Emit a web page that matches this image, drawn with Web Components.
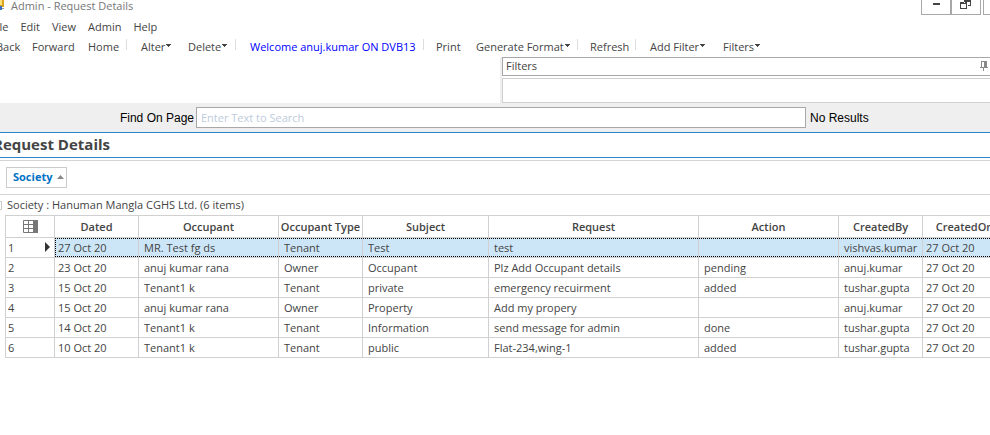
<!DOCTYPE html>
<html lang="en">
<head>
<meta charset="utf-8">
<title>Admin - Request Details</title>
<style>
html, body { margin: 0; min-height: 100%; background: #fff; }
body { font: 11px/16px "Open Sans", "Noto Sans", sans-serif; color: #444; overflow: hidden; }
</style>
</head>
<body>
<app-window>
  <title-bar slot="top">Admin - Request Details</title-bar>
  <menu-bar slot="top"></menu-bar>
  <tool-bar slot="top"></tool-bar>
  <filter-panel slot="top"></filter-panel>
  <find-bar slot="top"></find-bar>
  <page-heading>Request Details</page-heading>
  <group-chip>Society</group-chip>
  <request-grid></request-grid>
</app-window>
<script>
class Base extends HTMLElement {
  connectedCallback() {
    if (this.shadowRoot) return;
    this.attachShadow({ mode: 'open' }).innerHTML =
      '<style>:host{display:block}*{box-sizing:border-box}button{font:inherit;color:inherit;background:none;border:0;padding:0;margin:0;text-align:left;white-space:nowrap}</style>' + this.render();
  }
}

customElements.define('app-window', class extends Base {
  render() { return `<style>:host{overflow:hidden}</style><header><slot name="top"></slot></header><main><slot></slot></main>`; }
});

customElements.define('title-bar', class extends Base {
  render() { return `
    <style>
      :host { display: flex; height: 17px; color: #777; }
      .logo { width: 4px; height: 10px; }
      .name { flex: 1; padding-left: 7px; line-height: 11px; }
      .buttons { display: flex; height: 15px; }
      .buttons button { width: 30px; border: 1px solid #a8a8a8; border-top: 0; display: grid; place-items: start center; }
      .buttons button:last-child { width: 7px; margin-left: 2px; border-right: 0; }
      svg { display: block; }
    </style>
    <svg class="logo" viewBox="0 0 4 10" aria-hidden="true"><path fill="#d9a31c" d="M0 0h4v7H0z"/><path fill="#fbe07a" d="M0 0h2v5H0z"/><path fill="#3b6fc4" d="M0 6h2v4H0z"/><path fill="#999" d="M2 8h2v1H2z"/></svg>
    <span class="name"><slot></slot></span>
    <div class="buttons">
      <button aria-label="Minimize"><svg width="12" height="12"><path fill="#444" d="M3 3h7v2H3z"/></svg></button>
      <button aria-label="Restore"><svg width="12" height="10"><path fill="#444" fill-rule="evenodd" d="M4 0h7v6H8V5h2V2H5v1H4zM0 2h7v7H0zM1 4v4h5V4z"/></svg></button>
      <button aria-label="Close"></button>
    </div>`; }
});

customElements.define('menu-bar', class extends Base {
  render() { return `
    <style>nav { display: flex; gap: 12px; height: 20px; margin-left: -9px; } button { line-height: 20px; }</style>
    <nav>${['File', 'Edit', 'View', 'Admin', 'Help'].map(t => `<button>${t}</button>`).join('')}</nav>`; }
});

customElements.define('tool-bar', class extends Base {
  render() {
    const items = ['Back', 'Forward', 'Home', '|', 'Alter>', 'Delete>', '|', '@Welcome anuj.kumar ON DVB13', '|', 'Print', 'Generate Format>', '|', 'Refresh', '|', 'Add Filter>', 'Filters>'];
    const cell = t => t === '|' ? '<i></i>'
      : t[0] === '@' ? `<span>${t.slice(1)}</span>`
      : t.endsWith('>') ? `<button aria-haspopup="menu">${t.slice(0, -1)}<svg width="5" height="3" aria-hidden="true"><path d="M0 0h5v1H4v1H3v1H2V2H1V1H0z" fill="#444"/></svg></button>`
      : `<button>${t}</button>`;
    return `
    <style>
      nav { display: grid; grid-template-columns: 36px 56px 38px 15px 47px 47px 15px 173px 13px 40px 101px 13px 45px 15px 73px auto; justify-content: start; height: 20px; margin-left: -4px; line-height: 20px; }
      i { width: 1px; height: 11px; margin-top: 2px; background: #ddd; }
      span { color: #00f; white-space: nowrap; }
      svg { margin-left: 1px; vertical-align: 4px; }
    </style>
    <nav>${items.map(cell).join('')}</nav>`; }
});

customElements.define('filter-panel', class extends Base {
  render() { return `
    <style>
      section { margin-left: 500px; border-left: 2px solid #efefef; }
      .head { display: flex; align-items: center; justify-content: space-between; height: 19px; padding: 0 2px 1px 3px; border: 1px solid #a8a8a8; border-right: 0; }
      .body { height: 25px; margin-top: 2px; border: 1px solid #d0d0d0; border-right: 0; }
      svg { display: block; }
    </style>
    <section aria-label="Filters">
      <div class="head"><span>Filters</span><button aria-label="Pin"><svg width="8" height="10"><path fill="#888" d="M1 0h6v6h1v1H4v3H3V7H0V6h1zM2 1v5h2V1z" fill-rule="evenodd"/></svg></button></div>
      <div class="body"></div>
    </section>`; }
});

customElements.define('find-bar', class extends Base {
  render() { return `
    <style>
      form { display: flex; align-items: center; height: 29px; background: #efefef; font: 12px/16px "Liberation Sans", Arial, sans-serif; color: #000; }
      label { width: 196px; padding-right: 2px; text-align: right; }
      input { flex: 1; min-width: 0; height: 21px; padding: 0 4px; border: 1px solid #a8a8a8; border-radius: 0; background: #fff; font: 11px/16px "Open Sans", sans-serif; color: #444; outline: 0; }
      input::placeholder { color: #bccbdc; opacity: 1; }
      output { width: 184px; padding-left: 4px; }
    </style>
    <form><label for="q">Find On Page</label><input id="q" type="text" placeholder="Enter Text to Search"><output for="q">No Results</output></form>`; }
});

customElements.define('page-heading', class extends Base {
  render() { return `
    <style>
      :host { border-bottom: 1px solid #d4d4d4; padding-bottom: 2px; }
      h1 { margin: 0; height: 26px; border: solid #2a86cc; border-width: 1px 0; font-size: 15px; line-height: 23px; font-weight: 700; text-indent: -7px; white-space: nowrap; }
    </style>
    <h1><slot></slot></h1>`; }
});

customElements.define('group-chip', class extends Base {
  render() { return `
    <style>
      :host { padding: 6px; border-bottom: 1px solid #d4d4d4; }
      button { display: flex; align-items: center; gap: 5px; height: 21px; padding: 0 2px 1px 6px; border: 1px solid #ccc; color: #0072c6; font-weight: 700; }
    </style>
    <button><slot></slot><svg width="7" height="4" aria-hidden="true"><path d="M0 4l3.500-4L7 4z" fill="#888"/></svg></button>`; }
});

customElements.define('request-grid', class extends Base {
  render() {
    const cols = [['Dated', 84], ['Occupant', 140], ['Occupant Type', 84], ['Subject', 126], ['Request', 210], ['Action', 140], ['CreatedBy', 84], ['CreatedOn', 84]];
    const rows = [
      ['27 Oct 20', 'MR. Test fg ds', 'Tenant', 'Test', 'test', '', 'vishvas.kumar', '27 Oct 20'],
      ['23 Oct 20', 'anuj kumar rana', 'Owner', 'Occupant', 'Plz Add Occupant details', 'pending', 'anuj.kumar', '27 Oct 20'],
      ['15 Oct 20', 'Tenant1 k', 'Tenant', 'private', 'emergency recuirment', 'added', 'tushar.gupta', '27 Oct 20'],
      ['15 Oct 20', 'anuj kumar rana', 'Owner', 'Property', 'Add my propery', '', 'anuj.kumar', '27 Oct 20'],
      ['14 Oct 20', 'Tenant1 k', 'Tenant', 'Information', 'send message for admin', 'done', 'tushar.gupta', '27 Oct 20'],
      ['10 Oct 20', 'Tenant1 k', 'Tenant', 'public', 'Flat-234,wing-1', 'added', 'tushar.gupta', '27 Oct 20']];
    return `
    <style>
      .group { display: flex; align-items: center; gap: 5px; height: 20px; }
      .group button { width: 2px; height: 9px; border: 1px solid #ccc; border-left: 0; }
      table { table-layout: fixed; width: 1002px; margin-left: 5px; border-collapse: separate; border-spacing: 0; border: solid #d0d0d0; border-width: 1px 0 0 1px; }
      th, td { height: 20px; padding: 0 5px 1px; border: solid #d0d0d0; border-width: 0 1px 1px 0; line-height: 17px; text-align: left; font-weight: 400; white-space: nowrap; overflow: hidden; }
      thead th { height: 22px; padding: 0 0 1px; line-height: 19px; font-weight: 600; text-align: center; }
      tbody th { padding: 0 2px 1px; }
      tbody th div { display: flex; align-items: center; justify-content: space-between; }
      td.date { padding: 0 3px 1px; }
      tr.on td { background:
        repeating-linear-gradient(90deg, #000 0 1px, #cde6f7 1px 2px) 0 0 / 100% 1px no-repeat,
        repeating-linear-gradient(90deg, #000 0 1px, #cde6f7 1px 2px) 0 100% / 100% 1px no-repeat, #cde6f7;
        background-clip: padding-box; }
      tr.on td:nth-child(2) { background:
        repeating-linear-gradient(90deg, #000 0 1px, #cde6f7 1px 2px) 0 0 / 100% 1px no-repeat,
        repeating-linear-gradient(90deg, #000 0 1px, #cde6f7 1px 2px) 0 100% / 100% 1px no-repeat,
        repeating-linear-gradient(#000 0 1px, #cde6f7 1px 2px) 0 0 / 1px 100% no-repeat, #cde6f7;
        background-clip: padding-box; }
      svg { display: block; }
      thead svg { margin: 0 auto; }
    </style>
    <div class="group"><button aria-label="Collapse group"></button><span>Society : Hanuman Mangla CGHS Ltd. (6 items)</span></div>
    <table>
      <colgroup><col style="width:49px">${cols.map(c => `<col style="width:${c[1]}px">`).join('')}</colgroup>
      <thead><tr><th aria-label="Columns"><svg width="15" height="13"><path fill="#fff" stroke="#777" d="M.5.5h14v12H.5zM.5 4.500h10M.5 8.500h10M5.500.5v12"/><path fill="#777" d="M10 0h5v13h-5z"/></svg></th>${cols.map(c => `<th>${c[0]}</th>`).join('')}</tr></thead>
      <tbody>${rows.map((r, i) => `<tr${i ? '' : ' class="on" aria-selected="true"'}><th><div>${i + 1}${i ? '' : '<svg width="8" height="10" aria-hidden="true"><path d="M1 0l5 5-5 5z" fill="#333"/></svg>'}</div></th>${r.map((c, j) => `<td${j % 7 ? '' : ' class="date"'}>${c}</td>`).join('')}</tr>`).join('')}</tbody>
    </table>`; }
});
</script>
</body>
</html>
